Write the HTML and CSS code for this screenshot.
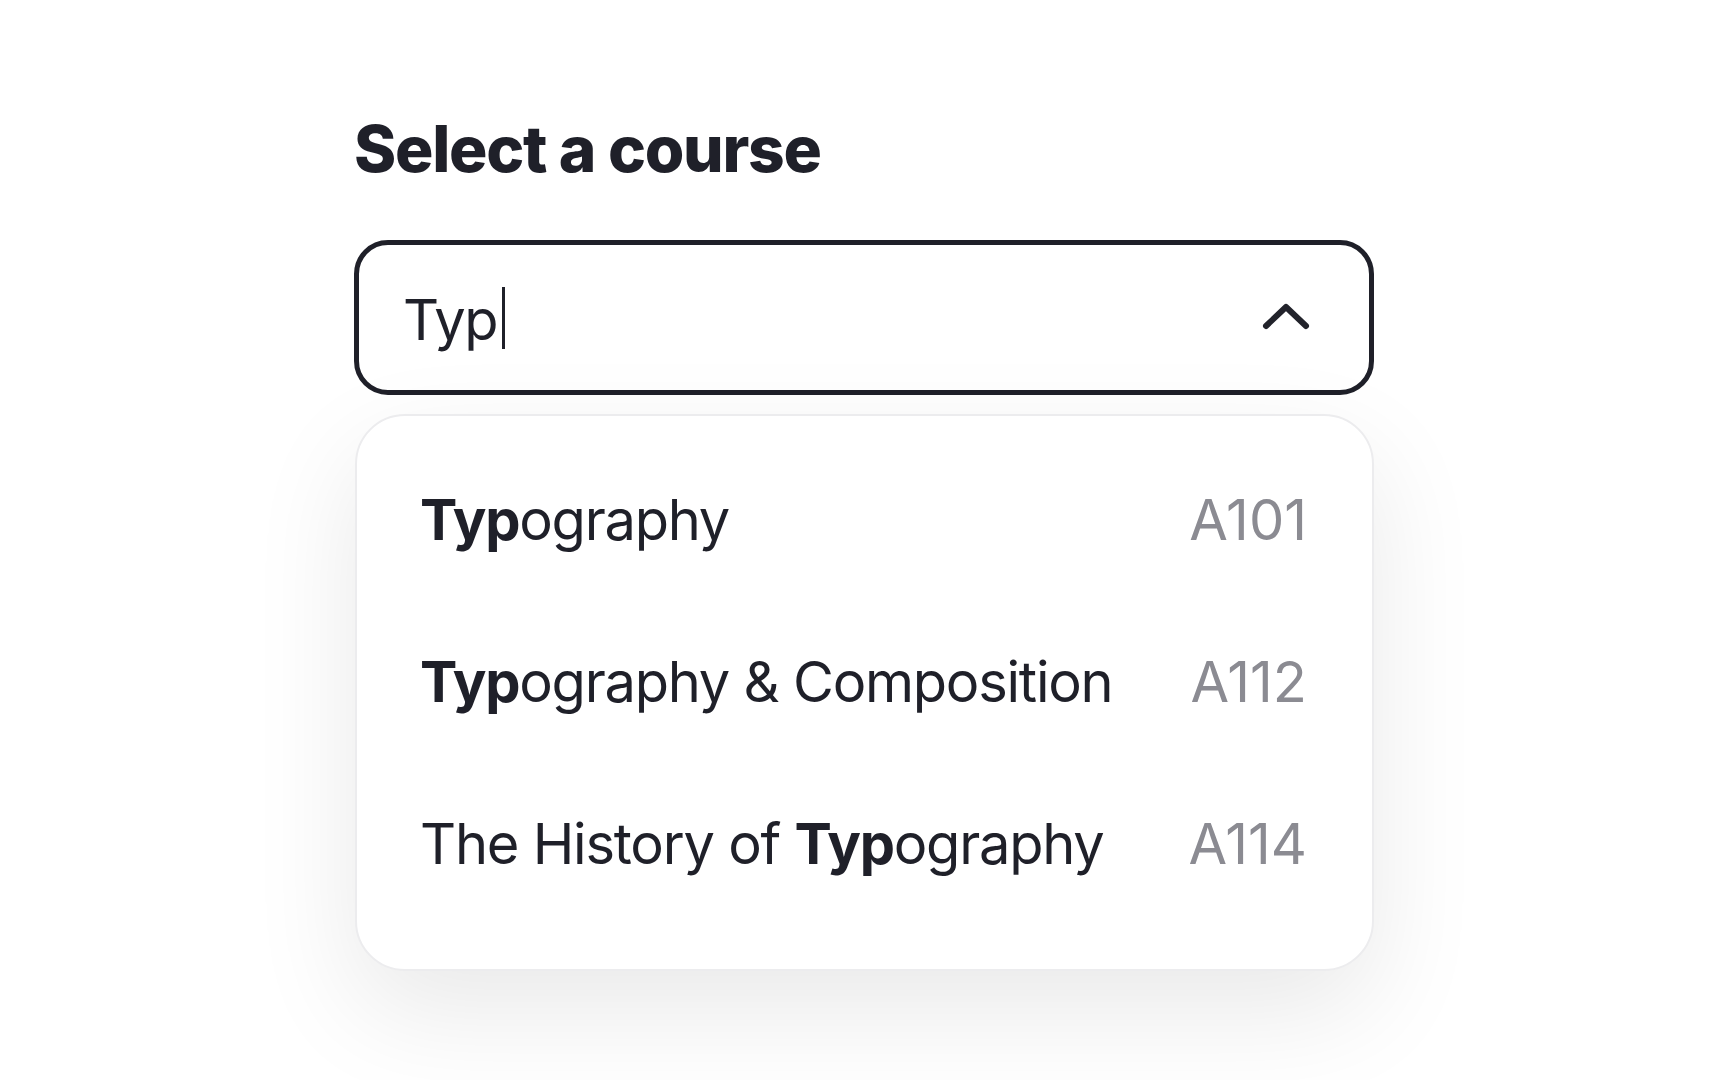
FILE: index.html
```html
<!DOCTYPE html>
<html lang="en">
<head>
<meta charset="utf-8">
<title>Select a course</title>
<link rel="stylesheet" href="styles.css">
</head>
<body>
<main class="page">
  <h1 class="title">Select a course</h1>
  <div class="field">
    <span class="field-value">Typ<span class="caret"></span></span>
    <svg class="chevron" width="50" height="34" viewBox="0 0 50 34" aria-hidden="true">
      <polyline points="5,28 25,9 45,28" fill="none" stroke="#22232b" stroke-width="6" stroke-linecap="round" stroke-linejoin="round"/>
    </svg>
  </div>
  <ul class="menu">
    <li class="option"><span class="option-name"><b>Typ</b>ography</span><span class="option-code">A101</span></li>
    <li class="option"><span class="option-name"><b>Typ</b>ography &amp; Composition</span><span class="option-code">A112</span></li>
    <li class="option"><span class="option-name">The History of <b>Typ</b>ography</span><span class="option-code">A114</span></li>
  </ul>
</main>
</body>
</html>
```

FILE: styles.css
```css
* { box-sizing: border-box; }
html, body { margin: 0; padding: 0; background: #ffffff; }
body {
  font-family: Inter, "Noto Sans", sans-serif;
  color: #1f2029;
  width: 1728px;
  height: 1080px;
  overflow: hidden;
}
.page {
  padding-top: 117px;
  margin-left: 354px;
  width: 1020px;
}
.title {
  margin: 0;
  font-size: 64px;
  line-height: 64px;
  font-weight: 800;
  letter-spacing: -0.02em;
  color: #1f2029;
}
.field {
  margin-top: 59px;
  height: 155px;
  border: 5px solid #1f2029;
  border-radius: 34px;
  display: flex;
  align-items: center;
  justify-content: space-between;
  padding: 4px 58px 0 44px;
}
.field-value {
  font-size: 56px;
  line-height: 1;
  font-weight: 400;
  letter-spacing: -0.025em;
  display: inline-flex;
  align-items: center;
}
.caret {
  display: inline-block;
  width: 3px;
  height: 62px;
  background: #1f2029;
  margin-left: 5px;
  margin-top: -4px;
}
.chevron { display: block; margin-top: -10px; }
.menu {
  list-style: none;
  margin: 19px 0 0 1px;
  width: 1019px;
  height: 557px;
  padding: 23px 65px 0 63px;
  border: 2px solid #ececee;
  border-radius: 50px;
  background: #ffffff;
  box-shadow: 0 40px 110px rgba(0, 0, 0, 0.09);
  position: relative;
}
.option {
  height: 162px;
  display: flex;
  align-items: center;
  justify-content: space-between;
  font-size: 56px;
  line-height: 1;
  letter-spacing: -0.022em;
}
.option-name b { font-weight: 700; }
.option-code { color: #8b8b92; letter-spacing: 0; }
```
